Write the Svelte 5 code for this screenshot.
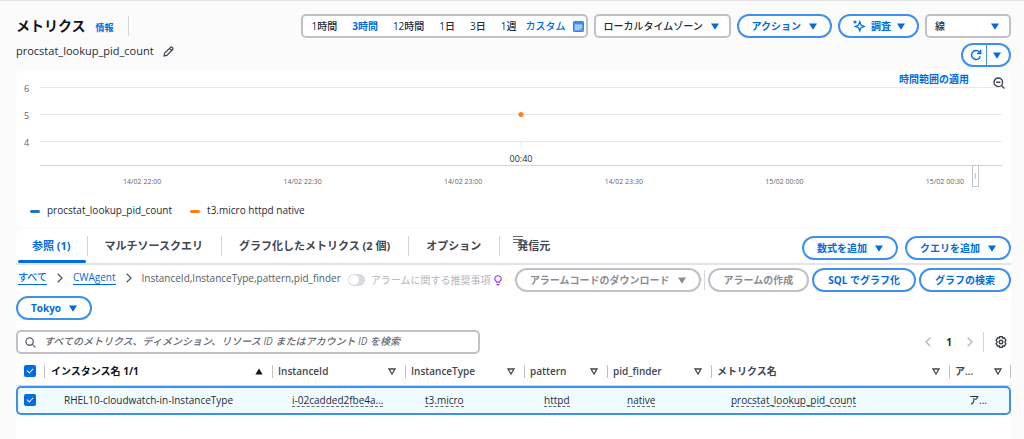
<script lang="ts">
	const ranges = ['1時間', '3時間', '12時間', '1日', '3日', '1週'];
	const tabs = ['参照 (1)', 'マルチソースクエリ', 'グラフ化したメトリクス (2 個)', 'オプション', '発信元'];
	const yTicks = [6, 5, 4];
	const xTicks = ['14/02 22:00', '14/02 22:30', '14/02 23:00', '14/02 23:30', '15/02 00:00', '15/02 00:30'];
	const legend = [
		{ name: 'procstat_lookup_pid_count', tone: 'blue' },
		{ name: 't3.micro httpd native', tone: 'orange' }
	];
	const columns = ['InstanceId', 'InstanceType', 'pattern', 'pid_finder', 'メトリクス名', 'ア...'];
	const rows = [
		{
			name: 'RHEL10-cloudwatch-in-InstanceType',
			values: ['i-02cadded2fbe4a...', 't3.micro', 'httpd', 'native', 'procstat_lookup_pid_count'],
			alarm: 'ア...'
		}
	];

	let range = $state('3時間');
	let tab = $state('参照 (1)');
	let query = $state('');
</script>

{#snippet caret()}
	<svg class="caret" viewBox="0 0 8 7" aria-hidden="true"><path d="M0 0.5h8L4 6.8z" fill="currentColor" /></svg>
{/snippet}

{#snippet chevron(back: boolean)}
	<svg class="chevron" viewBox="0 0 6 10" aria-hidden="true">
		<path d={back ? 'M5.3 0.8 1 5l4.3 4.2' : 'M0.7 0.8 5 5 0.7 9.2'} />
	</svg>
{/snippet}

<main>
	<header>
		<div class="bar">
			<h1>メトリクス</h1>
			<a class="info" href="#info">情報</a>
			<span class="rule"></span>

			<div class="tools">
				<div class="ranges" role="group" aria-label="時間範囲">
					{#each ranges as item}
						<button class:active={item === range} onclick={() => (range = item)}>{item}</button>
					{/each}
					<button class="custom">
						カスタム
						<svg viewBox="0 0 12 12" aria-hidden="true">
							<rect x="0.5" y="0.5" width="11" height="11" rx="1" fill="#5c9ff0" stroke="#1f7ae6" />
							<path d="M1 2.2h10" stroke="#1f7ae6" />
							<path d="M2.5 4h7v3.2L7.2 9.6H2.5z" fill="#d7e8fd" stroke="none" />
							<path d="M2.5 5.9h7M2.5 7.8h6M4.8 4v5.6M7.2 4v5.6" stroke="#5c9ff0" stroke-width="0.6" />
						</svg>
					</button>
				</div>
				<label class="select zone">
					<select aria-label="タイムゾーン"><option>ローカルタイムゾーン</option></select>
					{@render caret()}
				</label>
				<button class="pill wide">アクション {@render caret()}</button>
				<button class="pill spark">
					<svg class="sparkle" viewBox="0 0 12 12" aria-hidden="true">
						<path d="M6.8 1.8 8 5l3.2 1.4L8 7.7l-1.2 3.2-1.3-3.2-3.2-1.3L5.5 5z" />
						<path d="M2 0.4v3.2M0.4 2h3.2" />
					</svg>
					調査
					{@render caret()}
				</button>
				<label class="select kind">
					<select aria-label="グラフの種類"><option>線</option></select>
					{@render caret()}
				</label>
			</div>
		</div>

		<div class="bar sub">
			<span>procstat_lookup_pid_count</span>
			<button class="icon" aria-label="名前を編集">
				<svg class="pencil" viewBox="0 0 12 12" aria-hidden="true">
					<path d="M1.2 10.8 1.8 7.7 8.2 1.5q.9-.8 1.8 0l.5.5q.8.9 0 1.8L4.2 10.2zM7 2.8 9.3 5" />
				</svg>
			</button>
			<div class="split">
				<button aria-label="更新">
					<svg class="refresh" viewBox="0 0 14 14" aria-hidden="true">
						<path d="M12 8.4A5.2 5.2 0 1 1 10.8 3.4L12.3 5M12.4 1v4.2H8.3" />
					</svg>
				</button>
				<button aria-label="更新間隔">{@render caret()}</button>
			</div>
		</div>
	</header>

	<section class="panel graph">
		<div class="zoom">
			<a href="#apply">時間範囲の適用</a>
			<button class="icon" aria-label="縮小">
				<svg class="glass" viewBox="0 0 12 12" aria-hidden="true">
					<circle cx="5.3" cy="5.3" r="4.3" /><path d="M8.5 8.5 11.4 11.4M3.2 5.3h4.2" />
				</svg>
			</button>
		</div>
		<div class="plot">
			{#each yTicks as tick}
				<div class="tick"><span>{tick}</span><i></i></div>
			{/each}
			<div class="marks">
				<span class="dot"></span>
				<span class="stem"></span>
				<span class="time">00:40</span>
				<span class="handle"></span>
			</div>
		</div>
		<div class="times">
			{#each xTicks as tick}<span>{tick}</span>{/each}
		</div>
		<ul class="legend">
			{#each legend as item}
				<li class={item.tone}>{item.name}</li>
			{/each}
		</ul>
	</section>

	<section class="panel">
		<div class="tabbar">
			<div class="tabs" role="tablist">
				{#each tabs as item}
					<button role="tab" aria-selected={item === tab} onclick={() => (tab = item)}>{item}</button>
				{/each}
				<svg class="grip" viewBox="0 0 10 7" aria-hidden="true"><path d="M0 .5h10M0 3.5h10M0 6.5h6" /></svg>
			</div>
			<button class="pill wide">数式を追加 {@render caret()}</button>
			<button class="pill wide">クエリを追加 {@render caret()}</button>
		</div>

		<div class="actions">
			<nav aria-label="パス">
				<a href="#all">すべて</a>
				{@render chevron(false)}
				<a href="#cwagent">CWAgent</a>
				{@render chevron(false)}
				<span>InstanceId,InstanceType,pattern,pid_finder</span>
			</nav>
			<label class="toggle">
				<input type="checkbox" role="switch" disabled />
				アラームに関する推奨事項
			</label>
			<svg class="bulb" viewBox="0 0 9 12" aria-hidden="true">
				<path d="M3 8.2V7.4C1.6 6.6.9 5.6.9 4.4a3.6 3.6 0 0 1 7.2 0C8.1 5.6 7.4 6.6 6 7.4v.8zM2.8 10.8h3.4" />
			</svg>
			<div class="buttons">
				<button class="pill wide" disabled>アラームコードのダウンロード {@render caret()}</button>
				<span class="rule"></span>
				<button class="pill" disabled>アラームの作成</button>
				<button class="pill">SQL でグラフ化</button>
				<button class="pill">グラフの検索</button>
			</div>
		</div>
		<button class="pill wide region">Tokyo {@render caret()}</button>

		<div class="filter">
			<label class="search">
				<svg class="glass" viewBox="0 0 12 12" aria-hidden="true">
					<circle cx="5" cy="5" r="4" /><path d="M8 8 11.3 11.3" />
				</svg>
				<input
					type="search"
					aria-label="メトリクスの検索"
					placeholder="すべてのメトリクス、ディメンション、リソース ID またはアカウント ID を検索"
					bind:value={query}
				/>
			</label>
			<div class="pages">
				<button class="icon" aria-label="前のページ" disabled>{@render chevron(true)}</button>
				<b>1</b>
				<button class="icon" aria-label="次のページ" disabled>{@render chevron(false)}</button>
				<span class="rule"></span>
				<button class="icon" aria-label="設定">
					<svg class="gear" viewBox="0 0 12 12" aria-hidden="true">
						<path d="M4.6.7h2.8l.4 1.5 1.5-.4 1.6 2.5L9.9 6l1 1.7-1.6 2.5-1.5-.4-.4 1.5H4.6l-.4-1.5-1.5.4-1.6-2.5L2.1 6l-1-1.7 1.6-2.5 1.5.4z" />
						<circle cx="6" cy="6" r="1.8" />
					</svg>
				</button>
			</div>
		</div>

		<table>
			<colgroup>
				<col class="c-check" />
				<col class="c-name" />
				<col class="c-id" />
				<col class="c-type" />
				<col class="c-pattern" />
				<col class="c-finder" />
				<col />
				<col class="c-alarm" />
			</colgroup>
			<thead>
				<tr>
					<th><input type="checkbox" aria-label="すべて選択" checked /></th>
					<th class="sorted">
						<div>
							インスタンス名 1/1
							<svg class="sort" viewBox="0 0 8 7" aria-hidden="true"><path d="M4 .5 7.6 6.5H.4z" fill="currentColor" /></svg>
						</div>
					</th>
					{#each columns as column}
						<th>
							<div>
								{column}
								<svg class="sort" viewBox="0 0 8 7" aria-hidden="true"><path d="M1 1h6L4 6z" /></svg>
							</div>
						</th>
					{/each}
				</tr>
			</thead>
			<tbody>
				{#each rows as row}
					<tr>
						<td><input type="checkbox" aria-label={row.name} checked /></td>
						<td>{row.name}</td>
						{#each row.values as value}
							<td><span class="term">{value}</span></td>
						{/each}
						<td>{row.alarm}</td>
					</tr>
				{/each}
			</tbody>
		</table>
	</section>
</main>

<style>
	:global(body) {
		background: #fbfbfb;
	}

	main {
		--blue: #006ce0;
		--line: #c0c0c8;
		min-height: 100vh;
		box-sizing: border-box;
		display: flex;
		flex-direction: column;
		padding: 0 13px 0 16px;
		border-top: 1px solid #e4e4e7;
		font: 10px/16px 'Open Sans', 'Noto Sans CJK JP', sans-serif;
		color: #232b37;
		white-space: nowrap;
	}

	button,
	input,
	select {
		box-sizing: border-box;
		margin: 0;
		padding: 0;
		border: none;
		background: none;
		font: inherit;
		color: inherit;
	}

	button {
		cursor: pointer;
	}

	svg {
		flex: none;
		display: block;
		fill: none;
		stroke: currentColor;
		overflow: visible;
	}

	a {
		color: var(--blue);
		text-decoration: none;
	}

	header {
		display: flex;
		flex-direction: column;
		gap: 5px;
		padding: 13px 0 3px;
	}

	.bar {
		display: flex;
		align-items: center;
		height: 24px;
	}

	h1 {
		margin: 0 10px 0 0;
		font-size: 14px;
		line-height: 24px;
		color: #0f141a;
	}

	.info {
		padding-top: 4px;
		font-size: 9px;
		font-weight: 700;
	}

	.rule {
		width: 1px;
		height: 20px;
		background: #d5d5db;
	}

	.info + .rule {
		margin-left: 14px;
	}

	.tools {
		display: flex;
		gap: 6px;
		margin-left: auto;
	}

	.ranges {
		display: flex;
		align-items: center;
		gap: 15px;
		height: 24px;
		box-sizing: border-box;
		padding: 0 2px 0 8px;
		border: 2px solid var(--line);
		border-radius: 5px;
		background: #fff;
	}

	.ranges button {
		font-weight: 500;
	}

	.ranges .active {
		color: var(--blue);
		font-weight: 700;
	}

	.ranges .custom {
		display: flex;
		align-items: center;
		gap: 7px;
		margin-left: -6px;
		color: var(--blue);
	}

	.custom svg {
		width: 11px;
	}

	.caret {
		width: 8px;
		height: 7px;
		stroke: none;
	}

	.select {
		display: grid;
		align-items: center;
	}

	.select > * {
		grid-area: 1 / 1;
	}

	.select .caret {
		justify-self: end;
		margin-right: 12px;
		color: var(--blue);
		pointer-events: none;
	}

	.select select {
		appearance: none;
		width: 100%;
		height: 24px;
		padding: 0 8px;
		border: 2px solid var(--line);
		border-radius: 5px;
		background: #fff;
		font-weight: 500;
	}

	.zone {
		width: 137px;
	}

	.kind {
		width: 86px;
	}

	.pill {
		display: flex;
		align-items: center;
		gap: 8px;
		height: 24px;
		padding: 0 14px;
		border: 2px solid #3f8fec;
		border-radius: 12px;
		background: #fff;
		color: var(--blue);
		font-weight: 700;
	}

	.pill:disabled {
		border-color: var(--line);
		color: #8c8c94;
		cursor: default;
	}

	.pill.wide {
		padding: 0 13px;
	}

	.pill.spark {
		gap: 6px;
		padding: 0 12px 0 13px;
	}

	.sparkle {
		width: 12px;
		stroke-width: 1.3;
	}

	.sub {
		align-items: flex-start;
		font-size: 11px;
	}

	.icon {
		display: flex;
		align-items: center;
		color: #424650;
	}

	.pencil {
		width: 11px;
		margin: 3px 0 0 9px;
		stroke-width: 1.4;
	}

	.split {
		display: flex;
		margin-left: auto;
		height: 24px;
		box-sizing: border-box;
		border: 2px solid #3f8fec;
		border-radius: 12px;
		background: #fff;
		color: var(--blue);
	}

	.split button {
		display: flex;
		align-items: center;
		padding: 0 4px 0 7px;
	}

	.split button + button {
		padding: 0 8px 0 6px;
		border-left: 1px solid #3f8fec;
	}

	.refresh {
		width: 12px;
		stroke-width: 1.6;
	}

	.panel {
		background: #fff;
		border-radius: 8px;
	}

	.panel + .panel {
		flex: 1;
		margin-top: 2px;
		border-radius: 8px 8px 0 0;
	}

	.graph {
		position: relative;
	}

	.zoom {
		position: absolute;
		top: 1px;
		right: 6px;
		display: flex;
		gap: 24px;
		font-weight: 700;
	}

	.zoom .glass {
		margin-top: 6px;
	}

	.glass {
		width: 12px;
		stroke-width: 1.4;
	}

	.plot {
		position: relative;
		height: 96px;
		box-sizing: border-box;
		padding: 11px 9px 0 8px;
	}

	.tick {
		display: flex;
		gap: 10px;
		height: 27px;
		font-size: 9px;
		font-weight: 500;
		color: #5f636e;
	}

	.tick span {
		width: 6px;
	}

	.tick i {
		flex: 1;
		height: 1px;
		margin-top: 6px;
		background: #e9e9ed;
	}

	/* overlay sharing the grid lines' horizontal extent */
	.marks {
		position: absolute;
		inset: 0 9px 0 24px;
		border-bottom: 1px solid #d5d5db;
	}

	.marks span {
		position: absolute;
		left: 50%;
		transform: translateX(-50%);
	}

	.marks .dot {
		top: 42px;
		width: 5px;
		height: 5px;
		border-radius: 50%;
		background: #ff7f0e;
	}

	.marks .stem {
		top: 72px;
		width: 1px;
		height: 6px;
		background: #e9e9ed;
	}

	.marks .time {
		bottom: -2px;
		font-size: 9px;
	}

	.marks .handle {
		top: 95px;
		left: auto;
		right: 23px;
		width: 5px;
		height: 20px;
		border: 1px solid #c6c6cd;
		background: linear-gradient(#c6c6cd, #c6c6cd) center / 1px 6px no-repeat #fff;
		transform: none;
	}

	.times {
		display: flex;
		justify-content: space-between;
		padding: 8px 47px 0 107px;
		font-size: 7px;
		color: #5f636e;
	}

	.legend {
		display: flex;
		gap: 18px;
		margin: 0;
		padding: 12px 14px 9px;
		list-style: none;
	}

	.legend li {
		display: flex;
		align-items: center;
		gap: 7px;
		font-weight: 500;
	}

	.legend li::before {
		content: '';
		width: 10px;
		height: 3px;
		margin-top: 2px;
		border-radius: 2px;
		background: #1f77b4;
	}

	.legend .orange::before {
		background: #ff7f0e;
	}

	.tabbar {
		display: flex;
		align-items: center;
		gap: 7px;
		height: 34px;
		border-bottom: 2px solid #e4e4e8;
	}

	.tabbar .pill {
		margin-top: 4px;
	}

	.tabs {
		position: relative;
		display: flex;
		align-self: stretch;
		margin-right: auto;
	}

	.tabs button {
		position: relative;
		padding: 0 16px;
		font-size: 11px;
		font-weight: 700;
		color: #424650;
	}

	.tabs button + button {
		background: linear-gradient(#d5d5db, #d5d5db) left center / 1px 20px no-repeat;
		padding: 0 18px;
	}

	.tabs [aria-selected='true'] {
		color: var(--blue);
	}

	.tabs [aria-selected='true']::after {
		content: '';
		position: absolute;
		inset: auto 1px 0 2px;
		height: 3px;
		border-radius: 2px;
		background: var(--blue);
	}

	.grip {
		position: absolute;
		top: 7px;
		right: 45px;
		width: 10px;
		color: #656871;
	}

	.actions {
		display: flex;
		align-items: center;
		height: 24px;
		margin-top: 3px;
	}

	nav {
		display: flex;
		align-items: center;
		gap: 10px;
		margin-bottom: 4px;
		padding-left: 2px;
		font-weight: 500;
		color: #565a64;
	}

	nav a {
		line-height: 13px;
		border-bottom: 1px solid var(--blue);
	}

	.chevron {
		width: 6px;
		height: 10px;
		stroke-width: 1.3;
	}

	.toggle {
		display: flex;
		align-items: center;
		gap: 6px;
		margin-left: 7px;
		color: #b4b4bb;
	}

	.toggle input {
		appearance: none;
		width: 17px;
		height: 12px;
		padding: 1px;
		border-radius: 6px;
		background: #d9d9df;
	}

	.toggle input::before {
		content: '';
		display: block;
		width: 10px;
		height: 10px;
		border-radius: 50%;
		background: #fff;
	}

	.bulb {
		width: 8px;
		margin-left: 4px;
		color: #962eff;
		stroke-width: 1.3;
	}

	.buttons {
		display: flex;
		align-items: center;
		gap: 3px;
		margin-left: auto;
	}

	.region {
		margin-top: 4px;
	}

	.filter {
		display: flex;
		align-items: center;
		justify-content: space-between;
		margin-top: 10px;
	}

	.search {
		display: flex;
		align-items: center;
		gap: 8px;
		width: 464px;
		height: 24px;
		box-sizing: border-box;
		padding: 0 7px;
		border: 2px solid var(--line);
		border-radius: 5px;
		color: #5f636e;
	}

	.search svg {
		width: 11px;
	}

	.search input {
		flex: 1;
		padding-bottom: 2px;
		outline: none;
	}

	.search input::placeholder {
		color: #656871;
		font-style: italic;
		font-weight: 500;
	}

	.pages {
		display: flex;
		align-items: center;
		padding-right: 4px;
	}

	.pages b {
		margin: 0 15px;
	}

	.pages .icon:disabled {
		color: #b4b4bb;
	}

	.pages .rule {
		margin: 0 11px 0 10px;
	}

	.gear {
		width: 12px;
		stroke-width: 1.4;
	}

	table {
		width: 100%;
		table-layout: fixed;
		border-collapse: separate;
		border-spacing: 0;
	}

	.c-check {
		width: 28px;
	}

	.c-name {
		width: 228px;
	}

	.c-id {
		width: 133px;
	}

	.c-type {
		width: 119px;
	}

	.c-pattern {
		width: 83px;
	}

	.c-finder {
		width: 104px;
	}

	.c-alarm {
		width: 62px;
	}

	th,
	td {
		box-sizing: border-box;
		padding: 0;
		text-align: left;
	}

	th {
		height: 32px;
		padding: 3px 0 0 6px;
		border-bottom: 1px solid #d5d5db;
		color: #424650;
		font-weight: 600;
		background: linear-gradient(#c0c0c8, #c0c0c8) left 11px / 1px 13px no-repeat;
	}

	th:first-child {
		padding-left: 8px;
		background: none;
	}

	th:last-child {
		background:
			linear-gradient(#c0c0c8, #c0c0c8) left 11px / 1px 13px no-repeat,
			linear-gradient(#c0c0c8, #c0c0c8) right 11px / 1px 13px no-repeat;
	}

	th div {
		display: flex;
		align-items: center;
		justify-content: space-between;
		padding-right: 9px;
	}

	th.sorted {
		padding-left: 7px;
		color: #0f141a;
		font-weight: 700;
	}

	.sort {
		width: 8px;
		stroke-width: 1.3;
	}

	.sorted .sort {
		stroke: none;
	}

	td {
		height: 29px;
		padding: 0 0 2px 20px;
		border: 2px solid #3f8fec;
		border-width: 2px 0;
		background: #f0fbff;
		font-weight: 500;
	}

	td:first-child {
		padding-left: 6px;
		border-left-width: 2px;
		border-radius: 5px 0 0 5px;
	}

	td:last-child {
		border-right-width: 2px;
		border-radius: 0 5px 5px 0;
	}

	.term {
		display: inline-block;
		line-height: 12px;
		border-bottom: 1px dashed #656871;
	}

	table input {
		appearance: none;
		display: block;
		width: 12px;
		height: 12px;
		padding: 2px 0 0 4px;
		border-radius: 2px;
		background: var(--blue);
	}

	table input::before {
		content: '';
		display: block;
		width: 3px;
		height: 5px;
		border: solid #fff;
		border-width: 0 1px 1px 0;
		transform: rotate(42deg);
	}
</style>
